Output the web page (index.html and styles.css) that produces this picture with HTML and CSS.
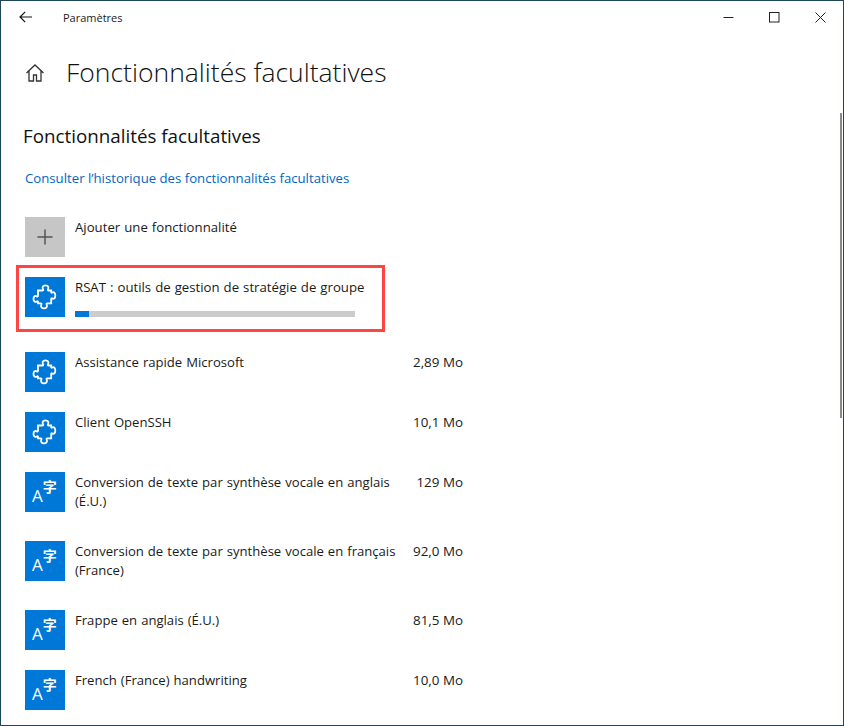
FILE: index.html
```html
<!DOCTYPE html>
<html lang="fr">
<head>
<meta charset="utf-8">
<title>Paramètres</title>
<link rel="stylesheet" href="styles.css">
</head>
<body>
<svg class="defs" width="0" height="0" aria-hidden="true">
  <symbol id="puzzle" viewBox="0 0 40 40">
    <path d="M13 13.500H17.500c.7 0 .9-.6.6-1.100-1.300-2.100-.1-4.100 2.400-4.100s3.700 2 2.400 4.100c-.3.500-.1 1.100.6 1.100H26.200V15c0 .7.600.9 1.100.6 1.600-1 3 .3 3 2.900s-1.400 3.900-3 2.900c-.5-.3-1.100-.1-1.100.6V26.300H22.200c-.7 0-.9.600-.6 1.100 1.100 2.200-.2 4-2.600 4s-3.700-1.800-2.600-4c.3-.5.1-1.100-.6-1.100H13V25c0-.7-.6-.9-1.100-.6-1.700 1.100-3.400-.1-3.400-2.500s1.700-3.600 3.400-2.500c.5.3 1.100.1 1.100-.6Z" fill="none" stroke="#fff" stroke-width="1.800"/>
  </symbol>
</svg>
<div class="window">
  <header class="titlebar">
    <div class="title-left">
      <svg class="back" viewBox="0 0 13 12"><path d="M13 6H1M6.200.8 1 6l5.200 5.200" fill="none" stroke="#111" stroke-width="1.200"/></svg>
      <span class="app-name">Paramètres</span>
    </div>
    <div class="controls">
      <span class="control"><svg viewBox="0 0 11 11"><path d="M.5 5.500h10" stroke="#222" fill="none"/></svg></span>
      <span class="control"><svg viewBox="0 0 11 11"><rect x=".5" y=".5" width="9.500" height="9.500" stroke="#222" fill="none"/></svg></span>
      <span class="control"><svg viewBox="0 0 11 11"><path d="M.5.500l10 10M10.500.500l-10 10" stroke="#222" fill="none"/></svg></span>
    </div>
  </header>
  <main class="content">
    <div class="page-head">
      <svg class="home" viewBox="0 0 20 20"><path d="M1.500 10 10 2l8.500 8M4 8v10h4.500v-6h3v6H16V8" fill="none" stroke="#333" stroke-width="1.300"/></svg>
      <h1>Fonctionnalités facultatives</h1>
    </div>
    <h2>Fonctionnalités facultatives</h2>
    <a class="history" href="#">Consulter l’historique des fonctionnalités facultatives</a>
    <div class="add-row">
      <span class="tile tile-add"><svg viewBox="0 0 40 40"><path d="M20 12.500v15M12.500 20h15" stroke="#555" stroke-width="1.500" fill="none"/></svg></span>
      <span class="name">Ajouter une fonctionnalité</span>
    </div>
    <div class="installing">
      <span class="tile"><svg><use href="#puzzle"/></svg></span>
      <div class="install-body">
        <span class="name">RSAT : outils de gestion de stratégie de groupe</span>
        <div class="progress"><div class="progress-fill"></div></div>
      </div>
      <div class="highlight"></div>
    </div>
    <ul class="features">
      <li class="feature"><span class="tile"><svg><use href="#puzzle"/></svg></span><span class="name">Assistance rapide Microsoft</span><span class="size">2,89 Mo</span></li>
      <li class="feature"><span class="tile"><svg><use href="#puzzle"/></svg></span><span class="name">Client OpenSSH</span><span class="size">10,1 Mo</span></li>
      <li class="feature"><span class="tile tile-lang"><span class="glyph-a">A</span><span class="glyph-z">字</span></span><span class="name">Conversion de texte par synthèse vocale en anglais (É.U.)</span><span class="size">129 Mo</span></li>
      <li class="feature"><span class="tile tile-lang"><span class="glyph-a">A</span><span class="glyph-z">字</span></span><span class="name">Conversion de texte par synthèse vocale en français (France)</span><span class="size">92,0 Mo</span></li>
      <li class="feature"><span class="tile tile-lang"><span class="glyph-a">A</span><span class="glyph-z">字</span></span><span class="name">Frappe en anglais (É.U.)</span><span class="size">81,5 Mo</span></li>
      <li class="feature"><span class="tile tile-lang"><span class="glyph-a">A</span><span class="glyph-z">字</span></span><span class="name">French (France) handwriting</span><span class="size">10,0 Mo</span></li>
    </ul>
    <div class="scrollbar"></div>
  </main>
</div>
</body>
</html>
```
FILE: styles.css
```css
* { box-sizing: border-box; }
html, body { margin: 0; height: 100%; }
body { font-family: "Open Sans", "Noto Sans", sans-serif; color: #1a1a1a; background: #fff; overflow: hidden; }
.defs { position: absolute; }
.window { width: 844px; height: 726px; border: 1px solid #1d4659; display: flex; flex-direction: column; overflow: hidden; }
.titlebar { height: 30px; flex: none; display: flex; justify-content: space-between; }
.title-left { display: flex; align-items: center; }
.back { width: 13px; height: 12px; margin: 1px 0 0 18px; }
.app-name { font-size: 11px; line-height: 16px; margin: 3px 0 0 31px; color: #222; }
.controls { display: flex; align-self: flex-start; }
.control { width: 46px; height: 32px; display: flex; align-items: center; justify-content: center; }
.control svg { width: 11px; height: 11px; }
.content { position: relative; flex: 1; padding: 0 0 0 24px; }
.page-head { display: flex; align-items: center; height: 44px; margin-top: 20px; }
.home { width: 20px; height: 20px; }
h1 { font-size: 26.500px; font-weight: 300; margin: -2px 0 0 21px; color: #111; line-height: 44px; }
h2 { font-size: 18.800px; font-weight: 400; margin: 27px 0 0 -2px; line-height: 28px; color: #111; }
.history { display: block; font-size: 13.200px; line-height: 20px; margin-top: 18px; color: #0067c0; text-decoration: none; }
.add-row { display: flex; margin-top: 29px; }
.tile { width: 40px; height: 40px; flex: none; background: #0078d7; display: block; }
.tile svg { width: 40px; height: 40px; display: block; }
.tile-add { background: #c6c6c6 radial-gradient(circle, #bdbdbd .6px, transparent .7px) 0 0 / 4px 4px; }
.tile-lang { display: flex; padding: 7px 0 0 7px; color: #fff; }
.glyph-a { font-size: 17px; line-height: 18px; margin-top: 8px; font-weight: 400; }
.glyph-z { font: 700 14px/15px "Noto Sans CJK SC", sans-serif; }
.name { font-size: 13.200px; word-spacing: .6px; line-height: 19px; color: #1a1a1a; margin-left: 10px; padding-top: 1px; display: block; }
.installing { position: relative; display: flex; margin-top: 20px; height: 40px; }
.install-body { display: flex; flex-direction: column; }
.progress { width: 280px; height: 6px; background: #ccc; margin: 14px 0 0 10px; }
.progress-fill { width: 14px; height: 6px; background: #0078d7; }
.highlight { position: absolute; left: -9px; top: -12px; width: 369px; height: 67px; border: 3px solid #ff4444; }
.features { list-style: none; margin: 35px 0 0; padding: 0; width: 438px; display: flex; flex-direction: column; gap: 20px; }
.feature { display: flex; min-height: 40px; }
.feature .name { flex: 1; font-size: 13.100px; padding-bottom: 10px; padding-right: 14px; }
.size { font-size: 13.400px; line-height: 19px; padding-top: 1px; color: #1a1a1a; white-space: nowrap; }
.scrollbar { position: absolute; right: 1px; top: 82px; width: 2px; height: 305px; background: #8a8a8a; }
```
